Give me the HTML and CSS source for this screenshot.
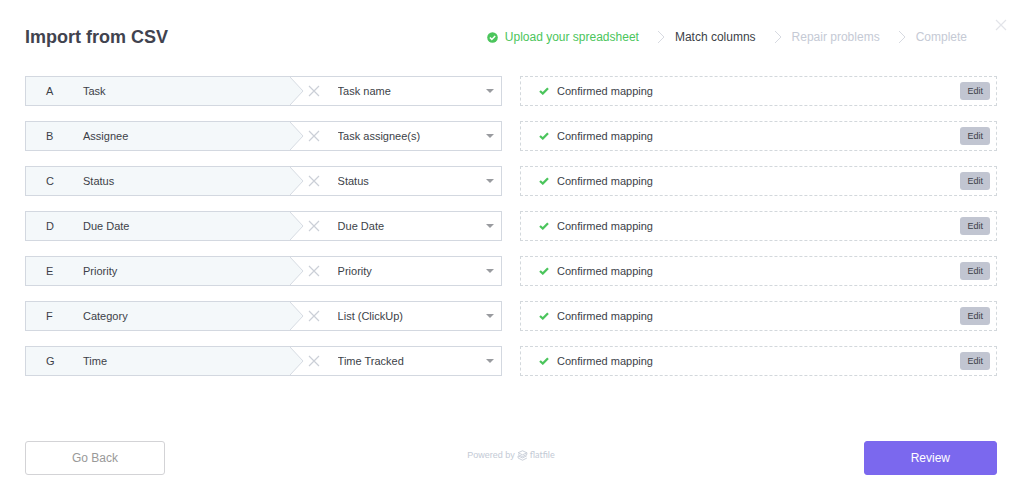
FILE: index.html
```html
<!DOCTYPE html>
<html lang="en">
<head>
<meta charset="utf-8">
<meta name="viewport" content="width=device-width, initial-scale=1">
<title>Import from CSV</title>
<link rel="stylesheet" href="styles.css">
</head>
<body>
<svg class="symbols" aria-hidden="true">
  <symbol id="tip" viewBox="0 0 14 28"><path d="M0 0L13 14L0 28Z" fill="#f4f8fa"/><path d="M0 0L13 14L0 28" fill="none" stroke="#d6dbe2"/></symbol>
  <symbol id="cross" viewBox="0 0 12 12"><path d="M1 1L11 11M11 1L1 11" fill="none" stroke="currentColor" stroke-width="1.200"/></symbol>
  <symbol id="check" viewBox="0 0 10 8"><path d="M1 4L3.800 6.500L9 1.300" fill="none" stroke="#4bc55c" stroke-width="2.300"/></symbol>
  <symbol id="caret" viewBox="0 0 8 4"><path d="M0 0H8L4 4Z" fill="#999b9f"/></symbol>
  <symbol id="chevron" viewBox="0 0 8 14"><path d="M1 1L7 7L1 13" fill="none" stroke="#d7dae1"/></symbol>
</svg>
<main class="importer">
  <header class="header">
    <h1 class="title">Import from CSV</h1>
    <ol class="steps">
      <li class="step step-done">
        <svg class="step-icon" viewBox="0 0 11 11"><circle cx="5.500" cy="5.500" r="5.300" fill="#4bc55c"/><path d="M2.900 5.500L4.800 7.400L8.200 3.900" fill="none" stroke="#fff" stroke-width="1.500"/></svg>
        Upload your spreadsheet
      </li>
      <li class="step step-current" aria-current="step"><svg class="chevron"><use href="#chevron"/></svg>Match columns</li>
      <li class="step"><svg class="chevron"><use href="#chevron"/></svg>Repair problems</li>
      <li class="step"><svg class="chevron"><use href="#chevron"/></svg>Complete</li>
    </ol>
    <button class="close" type="button" aria-label="Close"><svg class="cross"><use href="#cross"/></svg></button>
  </header>

  <section class="rows">
    <div class="row">
      <div class="match">
        <div class="source"><span class="letter">A</span><label for="col-a">Task</label></div>
        <svg class="tip"><use href="#tip"/></svg>
        <button class="ignore" type="button" aria-label="Ignore column"><svg class="cross"><use href="#cross"/></svg></button>
        <div class="picker"><select class="select" id="col-a"><option>Task name</option></select><svg class="caret"><use href="#caret"/></svg></div>
      </div>
      <div class="status"><svg class="check"><use href="#check"/></svg><span class="message">Confirmed mapping</span><button class="edit" type="button">Edit</button></div>
    </div>
    <div class="row">
      <div class="match">
        <div class="source"><span class="letter">B</span><label for="col-b">Assignee</label></div>
        <svg class="tip"><use href="#tip"/></svg>
        <button class="ignore" type="button" aria-label="Ignore column"><svg class="cross"><use href="#cross"/></svg></button>
        <div class="picker"><select class="select" id="col-b"><option>Task assignee(s)</option></select><svg class="caret"><use href="#caret"/></svg></div>
      </div>
      <div class="status"><svg class="check"><use href="#check"/></svg><span class="message">Confirmed mapping</span><button class="edit" type="button">Edit</button></div>
    </div>
    <div class="row">
      <div class="match">
        <div class="source"><span class="letter">C</span><label for="col-c">Status</label></div>
        <svg class="tip"><use href="#tip"/></svg>
        <button class="ignore" type="button" aria-label="Ignore column"><svg class="cross"><use href="#cross"/></svg></button>
        <div class="picker"><select class="select" id="col-c"><option>Status</option></select><svg class="caret"><use href="#caret"/></svg></div>
      </div>
      <div class="status"><svg class="check"><use href="#check"/></svg><span class="message">Confirmed mapping</span><button class="edit" type="button">Edit</button></div>
    </div>
    <div class="row">
      <div class="match">
        <div class="source"><span class="letter">D</span><label for="col-d">Due Date</label></div>
        <svg class="tip"><use href="#tip"/></svg>
        <button class="ignore" type="button" aria-label="Ignore column"><svg class="cross"><use href="#cross"/></svg></button>
        <div class="picker"><select class="select" id="col-d"><option>Due Date</option></select><svg class="caret"><use href="#caret"/></svg></div>
      </div>
      <div class="status"><svg class="check"><use href="#check"/></svg><span class="message">Confirmed mapping</span><button class="edit" type="button">Edit</button></div>
    </div>
    <div class="row">
      <div class="match">
        <div class="source"><span class="letter">E</span><label for="col-e">Priority</label></div>
        <svg class="tip"><use href="#tip"/></svg>
        <button class="ignore" type="button" aria-label="Ignore column"><svg class="cross"><use href="#cross"/></svg></button>
        <div class="picker"><select class="select" id="col-e"><option>Priority</option></select><svg class="caret"><use href="#caret"/></svg></div>
      </div>
      <div class="status"><svg class="check"><use href="#check"/></svg><span class="message">Confirmed mapping</span><button class="edit" type="button">Edit</button></div>
    </div>
    <div class="row">
      <div class="match">
        <div class="source"><span class="letter">F</span><label for="col-f">Category</label></div>
        <svg class="tip"><use href="#tip"/></svg>
        <button class="ignore" type="button" aria-label="Ignore column"><svg class="cross"><use href="#cross"/></svg></button>
        <div class="picker"><select class="select" id="col-f"><option>List (ClickUp)</option></select><svg class="caret"><use href="#caret"/></svg></div>
      </div>
      <div class="status"><svg class="check"><use href="#check"/></svg><span class="message">Confirmed mapping</span><button class="edit" type="button">Edit</button></div>
    </div>
    <div class="row">
      <div class="match">
        <div class="source"><span class="letter">G</span><label for="col-g">Time</label></div>
        <svg class="tip"><use href="#tip"/></svg>
        <button class="ignore" type="button" aria-label="Ignore column"><svg class="cross"><use href="#cross"/></svg></button>
        <div class="picker"><select class="select" id="col-g"><option>Time Tracked</option></select><svg class="caret"><use href="#caret"/></svg></div>
      </div>
      <div class="status"><svg class="check"><use href="#check"/></svg><span class="message">Confirmed mapping</span><button class="edit" type="button">Edit</button></div>
    </div>
  </section>

  <footer class="footer">
    <button class="button button-back" type="button">Go Back</button>
    <div class="powered">
      <span>Powered by</span>
      <svg class="brand-icon" viewBox="0 0 10 10"><path d="M5 .7L9 2.500L5 4.400L1 2.500ZM9 2.500V4L5 6L1 4.200M1 5.400L5 7.200L9 5.200M1 5.400V7.300L5 9.300L9 7.300" fill="none" stroke="#c3cad5" stroke-width=".8" stroke-linejoin="round"/></svg>
      <span class="brand">flatfile</span>
    </div>
    <button class="button button-review" type="button">Review</button>
  </footer>
</main>
</body>
</html>
```
FILE: styles.css
```css
* {
  box-sizing: border-box;
}

body {
  margin: 0;
  background: #fff;
  color: #3c3f48;
  font-family: "Liberation Sans", Arial, sans-serif;
  font-size: 11px;
  line-height: 16px;
}

button,
select {
  margin: 0;
  padding: 0;
  border: 0;
  background: none;
  color: inherit;
  font: inherit;
}

svg {
  display: block;
  flex: none;
}

.symbols {
  position: absolute;
  width: 0;
  height: 0;
}

.importer {
  padding: 24px 27px 24px 25px;
}

.header {
  position: relative;
  display: flex;
  align-items: center;
  justify-content: space-between;
  padding-right: 30px;
}

.title {
  margin: 0;
  color: #41434f;
  font-size: 18px;
  font-weight: bold;
  line-height: 26px;
}

.steps {
  display: flex;
  gap: 18px;
  margin: 0;
  padding: 0;
  list-style: none;
}

.step {
  display: flex;
  align-items: center;
  color: #c5cad5;
  font-size: 12px;
}

.step-done {
  color: #4bc55c;
}

.step-current {
  color: #3c3f48;
}

.step-icon {
  width: 11px;
  height: 11px;
  margin-right: 7px;
}

.chevron {
  width: 8px;
  height: 14px;
  margin-right: 10px;
}

.cross {
  width: 12px;
  height: 12px;
}

.close {
  position: absolute;
  top: -5px;
  right: -10px;
  color: #e2e4e9;
}

.rows {
  display: grid;
  gap: 15px;
  margin-top: 26px;
}

.row {
  display: grid;
  grid-template-columns: 1fr 1fr;
  gap: 18px;
}

.match {
  display: flex;
  align-items: center;
  border: 1px solid #d3d8e0;
}

.source {
  display: flex;
  flex: 271;
  align-items: center;
  align-self: stretch;
  padding-left: 20px;
  background: #f4f8fa;
}

.letter {
  width: 37px;
}

.tip {
  width: 14px;
  height: 28px;
}

.ignore {
  margin-left: 4px;
  color: #cbcfd7;
}

.picker {
  display: flex;
  flex: 174;
  align-items: center;
  padding: 0 7px 0 18px;
}

.select {
  flex: 1;
  min-width: 0;
  height: 16px;
  appearance: none;
}

.caret {
  width: 8px;
  height: 4px;
}

.status {
  display: flex;
  align-items: center;
  padding: 0 6px 0 18px;
  border: 1px dashed #d3d8dc;
}

.check {
  width: 10px;
  height: 8px;
}

.message {
  flex: 1;
  margin-left: 8px;
}

.edit {
  padding: 1px 7px;
  border-radius: 3px;
  background: #c1c5d1;
  font-size: 9px;
}

.footer {
  display: grid;
  grid-template-columns: 1fr auto 1fr;
  align-items: start;
  margin-top: 65px;
}

.button {
  padding: 8px 46px;
  border: 1px solid #d3d3d6;
  border-radius: 3px;
  font-size: 12px;
}

.button-back {
  justify-self: start;
  color: #999;
}

.button-review {
  justify-self: end;
  border-color: #7b68ee;
  background: #7b68ee;
  color: #fff;
}

.powered {
  display: flex;
  align-items: center;
  gap: 2px;
  color: #c3cad5;
  font-size: 9px;
  line-height: 28px;
}

.brand-icon {
  width: 11px;
  height: 11px;
}

.brand {
  font-family: Lato, sans-serif;
}
```
